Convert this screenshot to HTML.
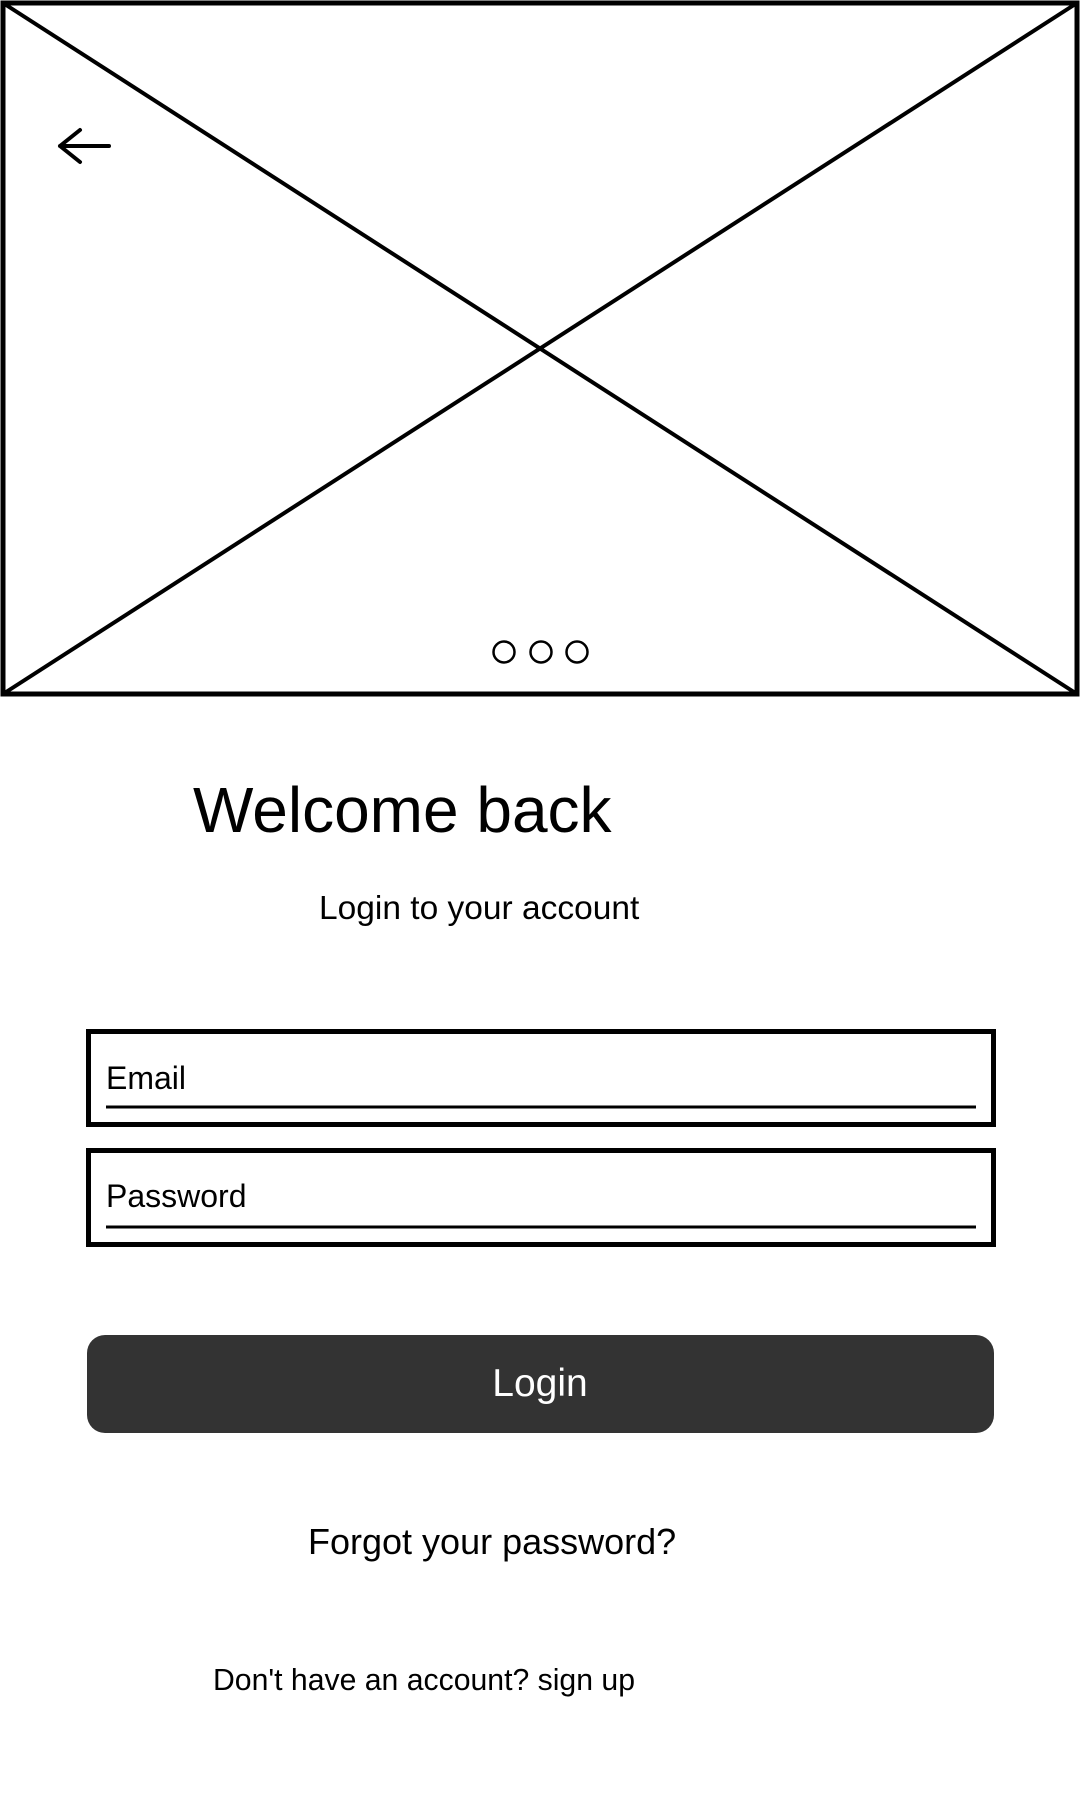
<!DOCTYPE html>
<html><head><meta charset="utf-8"><style>
html,body{margin:0;padding:0;background:#fff;width:1080px;height:1800px;overflow:hidden}
svg{display:block}
text{font-family:"Liberation Sans",Arial,sans-serif;fill:#000}
</style></head><body>
<svg width="1080" height="1800" viewBox="0 0 1080 1800" xmlns="http://www.w3.org/2000/svg">
<rect x="0" y="0" width="1080" height="1800" fill="#fff"/>
<rect x="3" y="3" width="1074" height="691" fill="none" stroke="#000" stroke-width="5"/>
<line x1="3" y1="3" x2="1077" y2="694" stroke="#000" stroke-width="4"/>
<line x1="1077" y1="3" x2="3" y2="694" stroke="#000" stroke-width="4"/>
<path d="M60 146 H109 M80 130 L60 146 L80 162" fill="none" stroke="#000" stroke-width="4" stroke-linecap="round" stroke-linejoin="round"/>
<circle cx="504" cy="652" r="10.5" fill="#fff" stroke="#000" stroke-width="2.5"/>
<circle cx="541" cy="652" r="10.5" fill="#fff" stroke="#000" stroke-width="2.5"/>
<circle cx="577" cy="652" r="10.5" fill="#fff" stroke="#000" stroke-width="2.5"/>
<text x="193" y="832" font-size="64">Welcome back</text>
<text x="319" y="919" font-size="33.5">Login to your account</text>
<rect x="88.5" y="1031.5" width="905" height="93" fill="none" stroke="#000" stroke-width="5"/>
<text x="106" y="1089" font-size="32">Email</text>
<line x1="106" y1="1107" x2="976" y2="1107" stroke="#000" stroke-width="3"/>
<rect x="88.5" y="1150.5" width="905" height="94" fill="none" stroke="#000" stroke-width="5"/>
<text x="106" y="1207" font-size="32">Password</text>
<line x1="106" y1="1227" x2="976" y2="1227" stroke="#000" stroke-width="3"/>
<rect x="87" y="1335" width="907" height="98" rx="18" fill="#333"/>
<text x="540" y="1396" font-size="39" text-anchor="middle" style="fill:#fff">Login</text>
<text x="308" y="1554" font-size="36">Forgot your password?</text>
<text x="213" y="1690" font-size="30.2">Don't have an account? sign up</text>
</svg>
</body></html>
